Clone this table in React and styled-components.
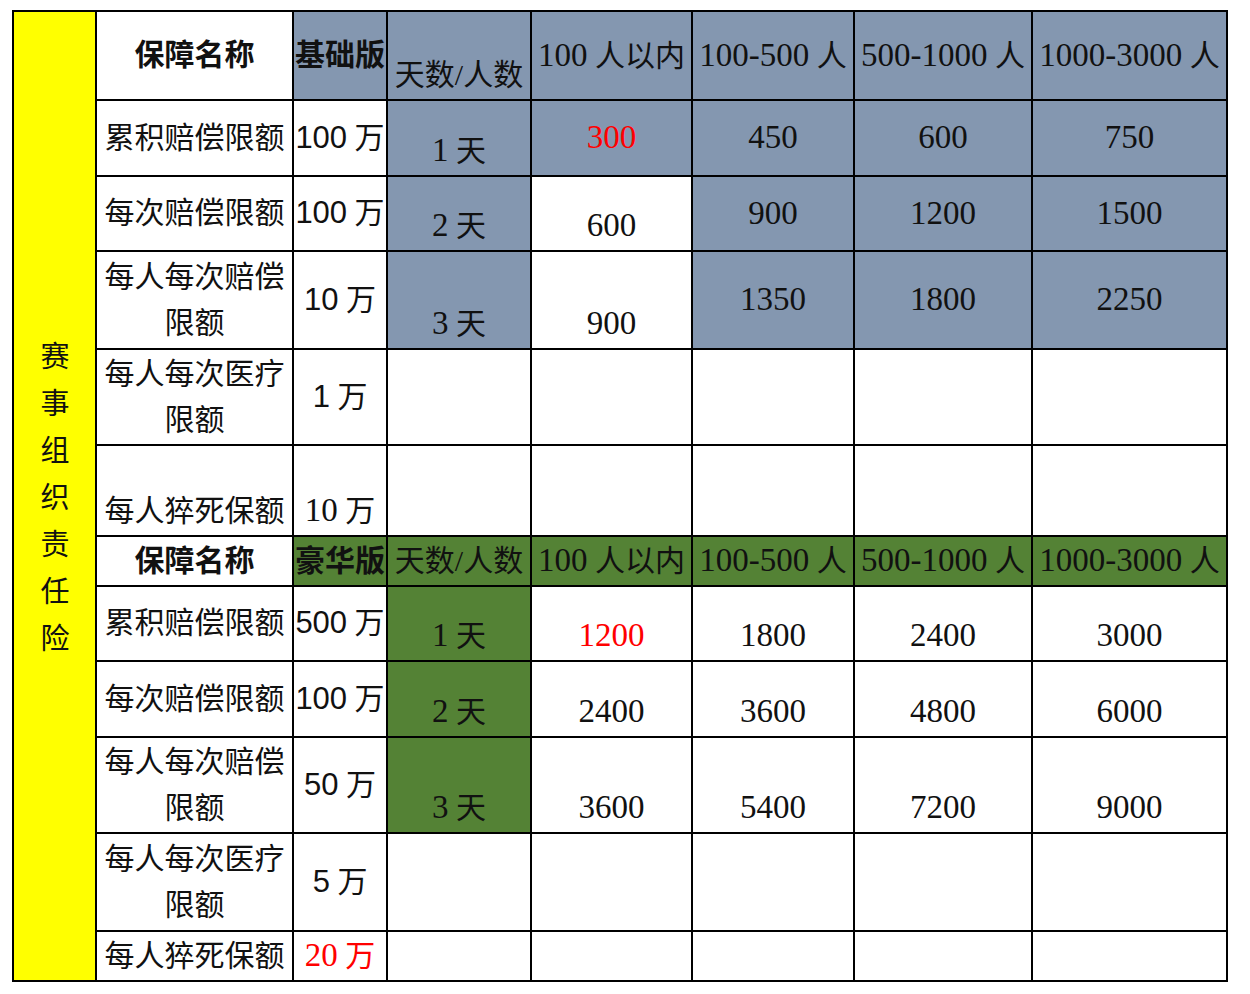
import React from "react";
import styled, { createGlobalStyle } from "styled-components";

const GlobalStyle = createGlobalStyle`
  html, body {
    margin: 0;
    padding: 0;
    background: #fff;
  }
  body {
    padding: 10px 0 0 12px;
    font-family: "Liberation Serif", "Noto Sans CJK SC", serif;
    color: #111;
  }
`;

const BLUE = "#8497b0";
const GREEN = "#548235";

const Sheet = styled.table`
  border-collapse: collapse;
  table-layout: fixed;
  width: 1216px;
  border: 2px solid #000;
  font-size: 30px;
  line-height: 46px;
`;

const Row = styled.tr`
  height: ${p => p.$h}px;
`;

const Cell = styled.td`
  border: 2px solid #000;
  padding: 0 0 1px;
  text-align: center;
  white-space: nowrap;
  overflow: hidden;
  vertical-align: ${p => p.$v || "middle"};
  background: ${p => p.$bg || "#fff"};
  color: ${p => (p.$red ? "#ff0000" : "#111")};
  font-weight: ${p => (p.$bold ? 700 : 400)};
  font-family: ${p =>
    p.$sans
      ? '"Liberation Sans", "Noto Sans CJK SC", sans-serif'
      : '"Liberation Serif", "Noto Sans CJK SC", serif'};
`;

const Num = styled.span`
  font-size: ${p => (p.$sans ? 31 : 33)}px;
  font-family: ${p =>
    p.$sans ? '"Liberation Sans", sans-serif' : '"Liberation Serif", serif'};
`;

const Side = styled.td`
  border: 2px solid #000;
  background: #ffff00;
  text-align: center;
  vertical-align: middle;
  padding: 0;
`;

const SideText = styled.div`
  writing-mode: vertical-rl;
  text-orientation: upright;
  margin: 0 auto;
  font-family: "Noto Sans CJK SC", sans-serif;
  font-size: 29px;
  letter-spacing: 18px;
  line-height: 1;
  padding-top: 18px;
`;

const Wrap = styled.span`
  white-space: normal;
  display: block;
`;

const widths = [83, 197, 94, 144, 161, 162, 178, 195];

const basic = {
  header: "基础版",
  color: BLUE,
  rows: [
    { name: "累积赔偿限额", amt: "100", amtSans: true, day: "1", vals: ["300", "450", "600", "750"], firstRed: true, valsBg: [BLUE, BLUE, BLUE, BLUE], v: ["middle", "middle", "middle", "middle"], h: 76 },
    { name: "每次赔偿限额", amt: "100", amtSans: true, day: "2", vals: ["600", "900", "1200", "1500"], valsBg: [null, BLUE, BLUE, BLUE], v: ["bottom", "middle", "middle", "middle"], h: 75 },
    { name: ["每人每次赔偿", "限额"], amt: "10", amtSans: true, day: "3", vals: ["900", "1350", "1800", "2250"], valsBg: [null, BLUE, BLUE, BLUE], v: ["bottom", "middle", "middle", "middle"], h: 98 },
    { name: ["每人每次医疗", "限额"], amt: "1", amtSans: true, h: 96 },
    { name: "每人猝死保额", amt: "10", nameV: "bottom", amtV: "bottom", h: 91 },
  ],
};

const deluxe = {
  header: "豪华版",
  color: GREEN,
  rows: [
    { name: "累积赔偿限额", amt: "500", amtSans: true, day: "1", vals: ["1200", "1800", "2400", "3000"], firstRed: true, valsBg: [], v: ["bottom", "bottom", "bottom", "bottom"], h: 75 },
    { name: "每次赔偿限额", amt: "100", amtSans: true, day: "2", vals: ["2400", "3600", "4800", "6000"], valsBg: [], v: ["bottom", "bottom", "bottom", "bottom"], h: 76 },
    { name: ["每人每次赔偿", "限额"], amt: "50", amtSans: true, day: "3", vals: ["3600", "5400", "7200", "9000"], valsBg: [], v: ["bottom", "bottom", "bottom", "bottom"], h: 96 },
    { name: ["每人每次医疗", "限额"], amt: "5", amtSans: true, h: 98 },
    { name: "每人猝死保额", amt: "20", amtRed: true, h: 50 },
  ],
};

const heads = [
  ["100", " 人以内"],
  ["100-500", " 人"],
  ["500-1000", " 人"],
  ["1000-3000", " 人"],
];

const Name = ({ name, v }) => (
  <Cell $v={v}>
    {Array.isArray(name) ? (
      <Wrap>
        {name[0]}
        <br />
        {name[1]}
      </Wrap>
    ) : (
      name
    )}
  </Cell>
);

const Section = ({ data, first, headH, headV }) => (
  <>
    <Row $h={headH}>
      {first && (
        <Side rowSpan={12}>
          <SideText>赛事组织责任险</SideText>
        </Side>
      )}
      <Cell $bold>保障名称</Cell>
      <Cell $bold $bg={data.color} $v={headV.tier}>
        {data.header}
      </Cell>
      <Cell $bg={data.color} $v={headV.days}>
        天数/人数
      </Cell>
      {heads.map(h => (
        <Cell key={h[0]} $bg={data.color}>
          <Num>{h[0]}</Num>
          {h[1]}
        </Cell>
      ))}
    </Row>
    {data.rows.map((r, i) => (
      <Row key={i} $h={r.h}>
        <Name name={r.name} v={r.nameV} />
        <Cell $red={r.amtRed} $v={r.amtV}>
          <Num $sans={r.amtSans}>{r.amt}</Num> 万
        </Cell>
        <Cell $bg={r.day ? data.color : null} $v="bottom">
          {r.day && (
            <>
              <Num>{r.day}</Num> 天
            </>
          )}
        </Cell>
        {[0, 1, 2, 3].map(j => (
          <Cell
            key={j}
            $bg={r.valsBg ? r.valsBg[j] : null}
            $v={r.v ? r.v[j] : "middle"}
            $red={r.firstRed && j === 0}
          >
            {r.vals && <Num>{r.vals[j]}</Num>}
          </Cell>
        ))}
      </Row>
    ))}
  </>
);

const App = () => (
  <>
    <GlobalStyle />
    <Sheet>
      <colgroup>
        {widths.map((w, i) => (
          <col key={i} style={{ width: w }} />
        ))}
      </colgroup>
      <tbody>
        <Section data={basic} first headH={89} headV={{ tier: "middle", days: "bottom" }} />
        <Section data={deluxe} headH={49} headV={{ tier: "middle", days: "middle" }} />
      </tbody>
    </Sheet>
  </>
);

export default App;
